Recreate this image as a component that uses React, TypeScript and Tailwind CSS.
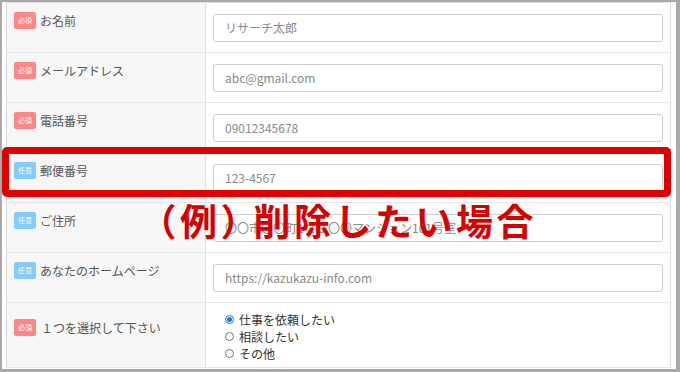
import React from "react";

type Row = {
  label: string;
  required: boolean;
  placeholder?: string;
};

const rows: Row[] = [
  { label: "お名前", required: true, placeholder: "リサーチ太郎" },
  { label: "メールアドレス", required: true, placeholder: "abc@gmail.com" },
  { label: "電話番号", required: true, placeholder: "09012345678" },
  { label: "郵便番号", required: false, placeholder: "123-4567" },
  { label: "ご住所", required: false, placeholder: "〇〇市〇〇町1-2-3 〇〇マンション101号室" },
  { label: "あなたのホームページ", required: false, placeholder: "https://kazukazu-info.com" },
];

function Badge({ required }: { required: boolean }) {
  return (
    <span
      className={
        "flex h-[17px] w-[22px] shrink-0 items-center justify-center rounded-[2px] text-[7px] leading-none text-white " +
        (required ? "bg-[#ff8686]" : "bg-[#84ccfb]")
      }
    >
      {required ? "必須" : "任意"}
    </span>
  );
}

function Radio({ checked, label }: { checked: boolean; label: string }) {
  return (
    <div className="flex h-[17px] items-center gap-[5px]">
      {checked ? (
        <span className="flex h-[9px] w-[9px] items-center justify-center rounded-full border border-[#1a73e8] bg-white">
          <span className="h-[5px] w-[5px] rounded-full bg-[#1a73e8]" />
        </span>
      ) : (
        <span className="h-[9px] w-[9px] rounded-full border border-[#777] bg-white" />
      )}
      <span className="text-[12px] leading-none text-[#333]">{label}</span>
    </div>
  );
}

export default function App() {
  return (
    <div className="relative box-border h-[372px] w-[680px] overflow-hidden border-b-[3px] border-l-2 border-r-4 border-t-2 border-[#a9a9a9] bg-white font-['Noto_Sans_CJK_JP',sans-serif]">
      <div className="pl-[4px]">
        <div className="w-[665px] border-l border-r border-t border-[#dedede]">
          {rows.map((r) => (
            <div key={r.label} className="box-border flex h-[50px] border-b border-[#e6e6e6]">
              <div className="box-border flex w-[199px] items-start border-r border-[#e2e2e2] bg-[#f7f7f7] pl-[7px] pt-[9px]">
                <div className="flex h-[17px] items-center gap-[4px]">
                  <Badge required={r.required} />
                  <span className="text-[12px] leading-none text-[#555]">{r.label}</span>
                </div>
              </div>
              <div className="flex-1 px-[7px] pt-[11px]">
                <div className="box-border flex h-[28px] items-center rounded-[3px] border border-[#cfcfcf] bg-white pl-[11px] text-[12px] text-[#8a8a8a]">
                  {r.placeholder}
                </div>
              </div>
            </div>
          ))}
          <div className="box-border flex h-[65px] border-b border-[#e6e6e6]">
            <div className="box-border flex w-[199px] items-start border-r border-[#e2e2e2] bg-[#f7f7f7] pl-[7px] pt-[16px]">
              <div className="flex h-[17px] items-center gap-[5px]">
                <Badge required={true} />
                <span className="text-[12px] leading-none text-[#555]">１つを選択して下さい</span>
              </div>
            </div>
            <div className="flex flex-1 flex-col pl-[19px] pt-[8px]">
              <Radio checked={true} label="仕事を依頼したい" />
              <Radio checked={false} label="相談したい" />
              <Radio checked={false} label="その他" />
            </div>
          </div>
        </div>
      </div>

      <div className="pointer-events-none absolute left-0 top-[145px] box-border h-[50px] w-[669px] rounded-[5px] border-[7px] border-[#e00000]" />
      <div className="pointer-events-none absolute left-[156px] top-[200px] whitespace-nowrap text-[37px] font-bold leading-none tracking-[3.5px] text-[#d60000]">
        <span className="[font-feature-settings:'halt']">（</span>
        <span>例</span>
        <span className="mr-[11px] [font-feature-settings:'halt']">）</span>
        削除したい場合
      </div>
    </div>
  );
}
